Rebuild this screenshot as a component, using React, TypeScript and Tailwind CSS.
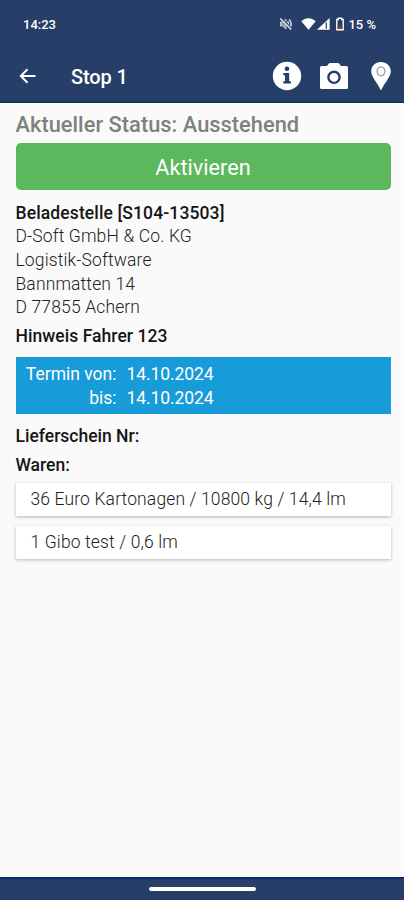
import React from 'react';

const MutedBellIcon = () => (
  <svg className="h-[14px] w-[14px]" viewBox="0 0 14 14" fill="none" stroke="#dfe5ef">
    <path d="M1.500 5h2L7 2v10L3.500 9h-2z" fill="#dfe5ef" fillOpacity=".55" strokeWidth=".8" />
    <path d="M8.500 4.500a3.500 3.500 0 0 1 0 5M10 2.500c3 2.500 3 6.500 0 9" strokeWidth="1.500" />
    <path d="M2 1.500l11 11" stroke="#263e68" strokeWidth="2.400" />
    <path d="M1.300 1.500l11 11" strokeWidth="1.500" />
  </svg>
);

const SignalIcons = () => (
  <svg className="h-[14px] w-[30px]" viewBox="0 0 30 14">
    <path d="M0.300 4.200C4.800 .3 10.200 .3 14.700 4.200L7.500 12.800z" fill="#fff" />
    <path d="M28.600 1V12.800H16z" fill="#fff" />
    <path d="M25.300 5.500v6.300" stroke="#263e68" strokeWidth="1.200" />
  </svg>
);

const BatteryIcon = () => (
  <svg className="h-[14px] w-[10px]" viewBox="0 0 10 14">
    <path d="M3.300 1.200h3.400v1.300h1.500v10.300H1.800V2.500h1.500z" fill="none" stroke="#fff" strokeWidth="1.400" />
    <path d="M2.500 9.300h5v2.200h-5z" fill="#a8392f" />
  </svg>
);

const BackIcon = () => (
  <svg className="h-[16px] w-[18px]" viewBox="0 0 18 16" fill="none" stroke="#fff" strokeWidth="2">
    <path d="M16.500 8H2M8.500 1.200L1.800 8l6.700 6.800" />
  </svg>
);

const InfoIcon = () => (
  <svg className="h-[30px] w-[30px]" viewBox="0 0 30 30">
    <circle cx="15" cy="15" r="14.200" fill="#fff" />
    <g fill="#263e68">
      <circle cx="15" cy="7.800" r="2.300" />
      <path d="M11.300 12h5.900v8.300h1.700v2.300h-7.600v-2.300H13v-6h-1.700z" />
    </g>
  </svg>
);

const CameraIcon = () => (
  <svg className="h-[28px] w-[30px]" viewBox="0 0 30 28">
    <path
      d="M2.500 4H8l1.700-2.300Q10.200 1 11 1h8q.8 0 1.300.7L22 4h5.500q1.500 0 1.500 1.500v20q0 1.500-1.500 1.500h-25Q1 27 1 25.500v-20Q1 4 2.500 4z"
      fill="#fff"
    />
    <circle cx="15" cy="15.300" r="5.600" fill="none" stroke="#263e68" strokeWidth="2.400" />
  </svg>
);

const PinIcon = () => (
  <svg className="h-[30px] w-[22px]" viewBox="0 0 22 30">
    <path d="M11 1C5.500 1 1.200 5 1.200 10.300 1.200 16 7.500 22 11 29.500 14.500 22 20.800 16 20.800 10.300 20.800 5 16.500 1 11 1z" fill="#fff" />
    <ellipse cx="11" cy="10.300" rx="3.900" ry="4.400" fill="none" stroke="#a5a9ad" strokeWidth="1.500" />
  </svg>
);

const address = ['D-Soft GmbH & Co. KG', 'Logistik-Software', 'Bannmatten 14', 'D 77855 Achern'];
const goods = ['36 Euro Kartonagen / 10800 kg / 14,4 lm', '1 Gibo test / 0,6 lm'];

const App: React.FC = () => {
  return (
    <div className="flex h-[900px] w-[404px] flex-col bg-[#fafafa] font-['Roboto',sans-serif] text-[17.500px] leading-[23.700px] text-[#222]">
      <header className="h-[103px] shrink-0 border-b-2 border-[#153762] bg-[#263e68] text-white">
        <div className="flex h-[49px] items-center pl-[23px] pr-[28px] text-[13px] font-medium">
          <span>14:23</span>
          <div className="ml-auto flex items-center">
            <MutedBellIcon />
            <span className="w-[8px]" />
            <SignalIcons />
            <span className="w-[4px]" />
            <BatteryIcon />
            <span className="ml-[3px]">15 %</span>
          </div>
        </div>
        <div className="flex h-[54px] items-center pl-[19px] pr-[12px]">
          <BackIcon />
          <h1 className="ml-[34px] pt-[3px] text-[20px] font-medium tracking-[-0.1px]">Stop 1</h1>
          <div className="ml-auto flex items-center">
            <InfoIcon />
            <span className="w-[17px]" />
            <CameraIcon />
            <span className="w-[21px]" />
            <PinIcon />
          </div>
        </div>
      </header>

      <main className="flex-1 pl-[15.500px] pr-[13.500px] pt-[9px]">
        <h2 className="h-[31px] text-[21.800px] font-medium leading-[26px] tracking-[0.03px] text-[#808080]">Aktueller Status: Ausstehend</h2>
        <button className="block h-[47px] w-full rounded-[5px] bg-[#5cb85c] pt-[2px] text-[21.700px] text-white">Aktivieren</button>

        <div className="mt-[11.500px]">
          <p className="font-medium tracking-[0.12px] text-[#151515]">Beladestelle [S104-13503]</p>
          {address.map((line) => (
            <p key={line} className="font-light tracking-[0.14px]">
              {line}
            </p>
          ))}
        </div>
        <p className="mt-[5px] font-medium tracking-[0.05px] text-[#151515]">Hinweis Fahrer 123</p>

        <div className="mt-[8.500px] grid h-[57px] grid-cols-[101px_1fr] content-center gap-x-[10px] bg-[#189bd9] pt-[2px] text-white">
          <span className="text-right">Termin von:</span>
          <span className="tracking-[-0.1px]">14.10.2024</span>
          <span className="text-right">bis:</span>
          <span className="tracking-[-0.1px]">14.10.2024</span>
        </div>

        <p className="mt-[11px] font-medium text-[#151515]">Lieferschein Nr:</p>
        <p className="mt-[5px] font-medium text-[#151515]">Waren:</p>
        <ul className="mt-[5px] space-y-[10px]">
          {goods.map((item) => (
            <li
              key={item}
              className="flex h-[33px] items-center bg-white pl-[15px] pt-[1px] font-light tracking-[0.13px] shadow-[0_1px_3px_rgba(0,0,0,0.28)]"
            >
              {item}
            </li>
          ))}
        </ul>
      </main>

      <footer className="flex h-[23px] shrink-0 justify-center border-t-2 border-[#0f2b60] bg-[#263e68] pt-[8px]">
        <div className="h-[4px] w-[107px] rounded-full bg-white" />
      </footer>
    </div>
  );
};

export default App;
